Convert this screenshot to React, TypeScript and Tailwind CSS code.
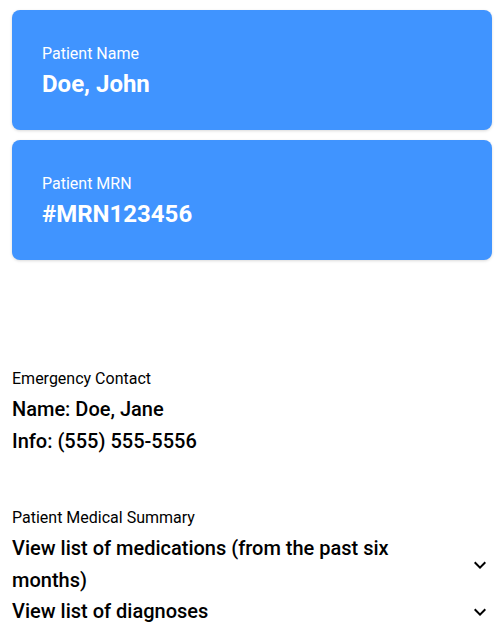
const ExpandMore = () => (
  <svg width="24" height="24" viewBox="0 0 24 24" fill="currentColor" className="shrink-0">
    <path d="M16.59 8.59 12 13.17 7.41 8.59 6 10l6 6 6-6z" />
  </svg>
)

type InfoCardProps = {
  label: string
  value: string
}

const InfoCard = ({ label, value }: InfoCardProps) => (
  <div className="rounded-lg bg-[#4094ff] px-[30px] pt-[33px] pb-[30px] text-white shadow-[0_1px_3px_rgba(0,0,0,0.15)]">
    <p className="text-base leading-[22px]">{label}</p>
    <p className="mt-[3px] text-2xl font-bold leading-[32px]">{value}</p>
  </div>
)

const SummaryRow = ({ text }: { text: string }) => (
  <div className="flex items-center justify-between">
    <span className="pr-[24px] text-xl font-medium leading-[31.5px]">{text}</span>
    <ExpandMore />
  </div>
)

export default function App() {
  return (
    <div className="bg-white pl-[12px] pr-[10px] pt-[10px] font-['Roboto',sans-serif] text-black">
      {/* Patient cards */}
      <div className="flex flex-col gap-[10px]">
        <InfoCard label="Patient Name" value="Doe, John" />
        <InfoCard label="Patient MRN" value="#MRN123456" />
      </div>

      {/* Emergency contact */}
      <section className="mt-[109px]">
        <p className="text-base leading-[20px]">Emergency Contact</p>
        <div className="mt-[4px] text-xl font-medium leading-[32px]">
          <p>Name: Doe, Jane</p>
          <p>Info: (555) 555-5556</p>
        </div>
      </section>

      {/* Medical summary */}
      <section className="mt-[51px]">
        <p className="text-base leading-[20px]">Patient Medical Summary</p>
        <div className="mt-[5px]">
          <SummaryRow text="View list of medications (from the past six months)" />
          <SummaryRow text="View list of diagnoses" />
        </div>
      </section>
    </div>
  )
}
